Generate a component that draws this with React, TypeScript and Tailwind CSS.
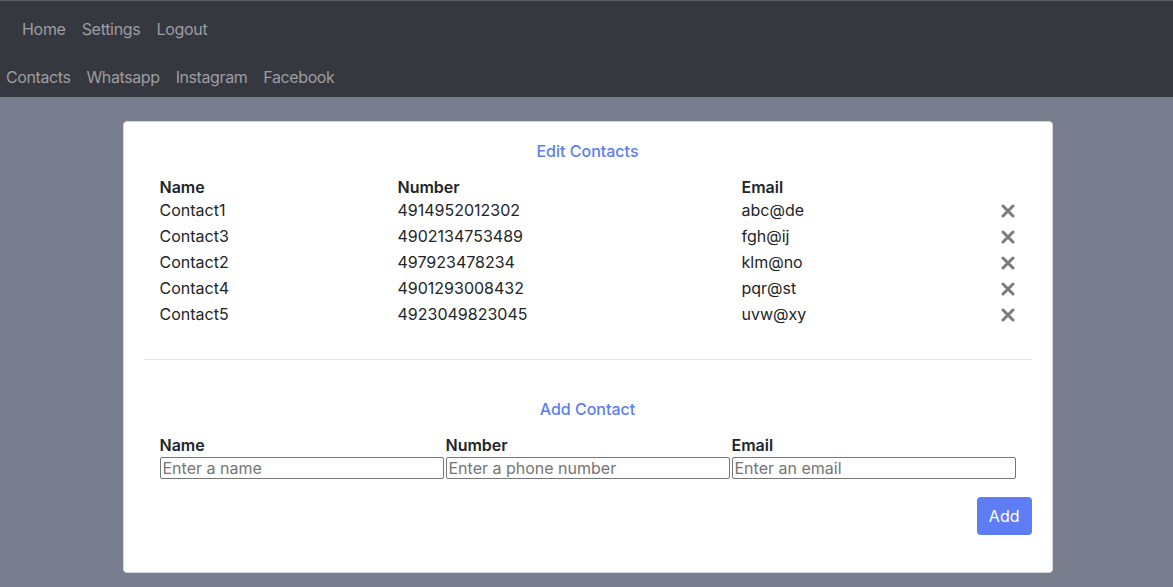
import React from "react";

const contacts = [
  { name: "Contact1", number: "4914952012302", email: "abc@de" },
  { name: "Contact3", number: "4902134753489", email: "fgh@ij" },
  { name: "Contact2", number: "497923478234", email: "klm@no" },
  { name: "Contact4", number: "4901293008432", email: "pqr@st" },
  { name: "Contact5", number: "4923049823045", email: "uvw@xy" },
];

function XIcon() {
  return (
    <svg width="14" height="14" viewBox="0 0 14 14" className="block">
      <path d="M2 2 L12 12 M12 2 L2 12" stroke="#7b7b7b" strokeWidth="3" strokeLinecap="round" />
    </svg>
  );
}

export default function App() {
  return (
    <div
      className="min-h-[587px] bg-[#787e8e] text-[16px] text-[#212529]"
      style={{ fontFamily: "Inter, 'Noto Sans', sans-serif" }}
    >
      <nav className="bg-[#35383e] border-t border-[#5a5d62] h-[97px] flex flex-col">
        <div className="h-[56px] flex items-center pl-[14px]">
          {["Home", "Settings", "Logout"].map((l) => (
            <a key={l} className="px-2 text-[#9c9ea2] tracking-[-0.3px]">{l}</a>
          ))}
        </div>
        <div className="h-[40px] flex items-center -ml-[2px]">
          {["Contacts", "Whatsapp", "Instagram", "Facebook"].map((l) => (
            <a key={l} className="px-2 text-[#9c9ea2] tracking-[-0.4px]">{l}</a>
          ))}
        </div>
      </nav>

      <div className="pt-[24px] pb-[15px] pl-[2px] flex justify-center">
        <div className="w-[930px] bg-white rounded-[4px] border border-[#d5d7dc] px-5 pt-[17px] pb-[37px]">
          <h2 className="text-center text-[#5b7ef6] font-medium leading-[24px]">Edit Contacts</h2>

          <div className="px-4 mt-[12px]">
            <div className="grid grid-cols-[238px_344px_1fr_40px] h-[22px] items-center font-semibold">
              <div>Name</div>
              <div>Number</div>
              <div>Email</div>
              <div />
            </div>
            {contacts.map((c) => (
              <div key={c.name} className="grid grid-cols-[238px_344px_1fr_40px] h-[26px] items-center">
                <div>{c.name}</div>
                <div>{c.number}</div>
                <div>{c.email}</div>
                <div className="flex justify-end pr-[1px] pt-[2px]">
                  <XIcon />
                </div>
              </div>
            ))}
          </div>

          <hr className="mt-[32px] border-t border-[#e3e4e6]" />

          <h2 className="mt-[37px] text-center text-[#5b7ef6] font-medium leading-[24px]">Add Contact</h2>

          <div className="px-4 mt-[12px] flex gap-[2px]">
            {[
              ["Name", "Enter a name"],
              ["Number", "Enter a phone number"],
              ["Email", "Enter an email"],
            ].map(([label, ph]) => (
              <div key={label} className="w-[284px] flex flex-col">
                <label className="font-semibold leading-[24px]">{label}</label>
                <input
                  placeholder={ph}
                  className="h-[22px] border border-[#767676] rounded-[2px] px-[2px] text-[16px] placeholder:text-[#757575] outline-none"
                />
              </div>
            ))}
          </div>

          <div className="flex justify-end mt-[18px]">
            <button className="h-[38px] px-3 rounded-[4px] bg-[#5e7cf4] text-white">Add</button>
          </div>
        </div>
      </div>
    </div>
  );
}
